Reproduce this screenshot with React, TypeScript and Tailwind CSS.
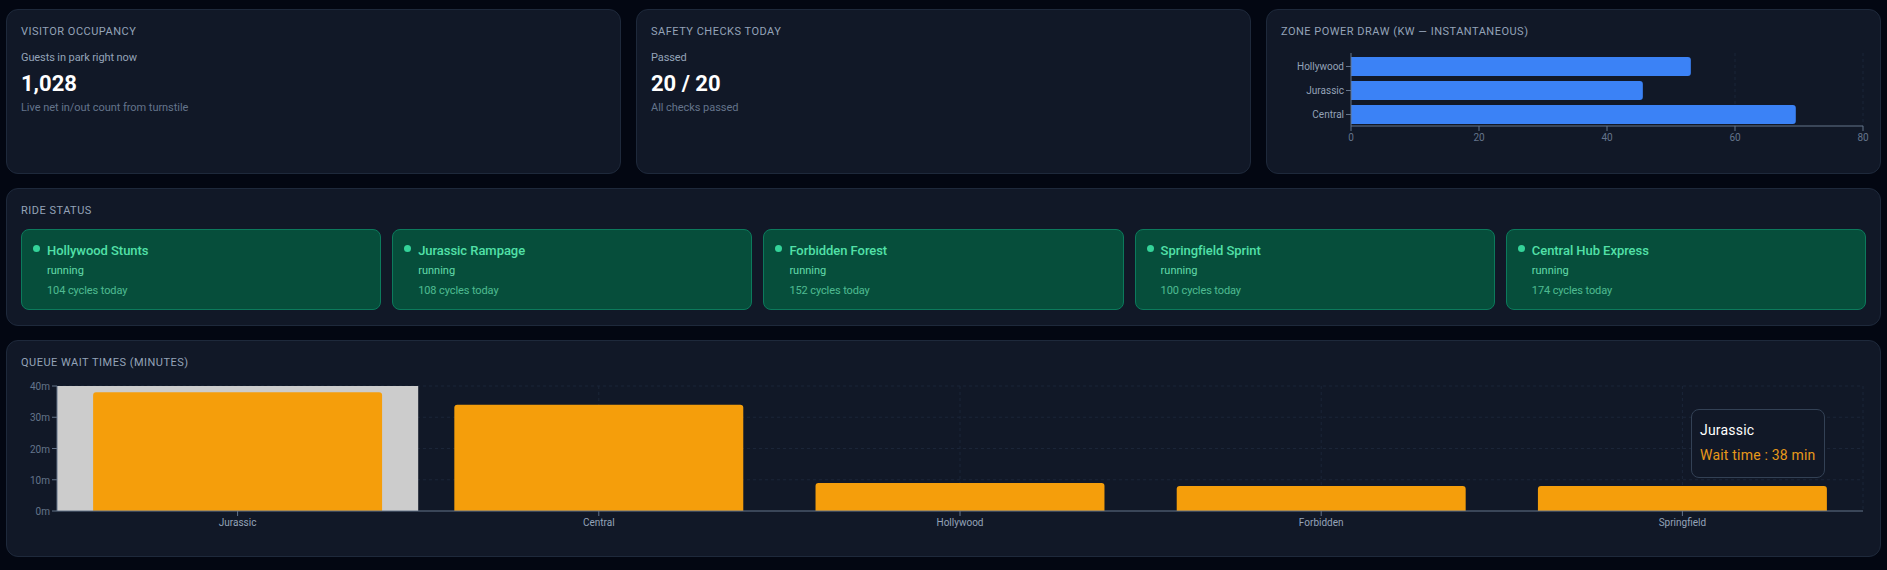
const rides = [
  { name: "Hollywood Stunts", cycles: 104 },
  { name: "Jurassic Rampage", cycles: 108 },
  { name: "Forbidden Forest", cycles: 152 },
  { name: "Springfield Sprint", cycles: 100 },
  { name: "Central Hub Express", cycles: 174 },
];

const power = [
  { name: "Hollywood", value: 53.1 },
  { name: "Jurassic", value: 45.6 },
  { name: "Central", value: 69.5 },
];

const queues = [
  { name: "Jurassic", value: 38 },
  { name: "Central", value: 34 },
  { name: "Hollywood", value: 9 },
  { name: "Forbidden", value: 8 },
  { name: "Springfield", value: 8 },
];

const font = "font-['Roboto','Liberation_Sans',sans-serif]";
const grid = "#1b2538";

function Title({ children }: { children: string }) {
  return <h2 className="text-[11px] leading-4 font-normal uppercase tracking-[0.5px] text-[#94a3b8]">{children}</h2>;
}

function Stat({ title, label, value, note }: { title: string; label: string; value: string; note: string }) {
  return (
    <section className="min-w-0 flex-1 rounded-xl border border-[#1e293b] bg-[#111827] px-[14px] pt-[14px]">
      <Title>{title}</Title>
      <p className="mt-[10px] text-[11px] leading-4 tracking-[-0.1px] text-[#94a3b8]">{label}</p>
      <p className="mt-[4px] text-[22px] leading-7 font-bold text-white">{value}</p>
      <p className="mt-[2px] text-[11px] leading-4 tracking-[-0.05px] text-[#64748b]">{note}</p>
    </section>
  );
}

function PowerChart() {
  const x0 = 70;
  const w = 512;
  const sx = (v: number) => x0 + (v / 80) * w;
  const top = 13;
  const base = 86;
  return (
    <svg width="585" height="105" className="block overflow-visible">
      {[60, 80].map((t) => (
        <line key={t} x1={sx(t)} x2={sx(t)} y1={top} y2={base} stroke={grid} strokeDasharray="3 3" />
      ))}
      {power.map((p, i) => (
        <g key={p.name}>
          <path
            d={`M${x0} ${17 + i * 24}h${sx(p.value) - x0 - 3}a3 3 0 0 1 3 3v13a3 3 0 0 1 -3 3h-${sx(p.value) - x0 - 3}z`}
            fill="#3b82f6"
          />
          <line x1={x0 - 5} x2={x0} y1={26.5 + i * 24} y2={26.5 + i * 24} stroke="#64748b" />
          <text x={x0 - 7} y={30 + i * 24} textAnchor="end" fontSize="10" fill="#94a3b8">{p.name}</text>
        </g>
      ))}
      <line x1={x0} x2={x0} y1={top} y2={base} stroke="#64748b" />
      <line x1={x0} x2={x0 + w} y1={base} y2={base} stroke="#64748b" />
      {[0, 20, 40, 60, 80].map((t) => (
        <g key={t}>
          <line x1={sx(t)} x2={sx(t)} y1={base} y2={base + 5} stroke="#64748b" />
          <text x={sx(t)} y={base + 15} textAnchor="middle" fontSize="10" fill="#64748b">{t}</text>
        </g>
      ))}
    </svg>
  );
}

function QueueChart() {
  const x0 = 36;
  const band = 361.2;
  const top = 15;
  const base = 140;
  const sy = (v: number) => base - (v / 40) * 125;
  return (
    <svg width="1843" height="165" className="block">
      {[0.5, 1.5, 2.5, 3.5, 4.5, 5].map((i) => (
        <line key={i} x1={x0 + i * band} x2={x0 + i * band} y1={top} y2={base} stroke={grid} strokeDasharray="3 3" />
      ))}
      {[10, 20, 30, 40].map((t) => (
        <line key={t} x1={x0} x2={x0 + 5 * band} y1={sy(t)} y2={sy(t)} stroke={grid} strokeDasharray="3 3" />
      ))}
      <rect x={x0} y={top} width={band} height={base - top} fill="#cccccc" />
      {queues.map((q, i) => {
        const x = x0 + i * band + band * 0.1;
        const bw = band * 0.8;
        const y = sy(q.value);
        return (
          <g key={q.name}>
            <path d={`M${x} ${base}V${y + 3}a3 3 0 0 1 3 -3H${x + bw - 3}a3 3 0 0 1 3 3V${base}z`} fill="#f59e0b" />
            <line x1={x + bw / 2} x2={x + bw / 2} y1={base} y2={base + 5} stroke="#64748b" />
            <text x={x + bw / 2} y={base + 15} textAnchor="middle" fontSize="10" fill="#94a3b8">{q.name}</text>
          </g>
        );
      })}
      {[0, 10, 20, 30, 40].map((t) => (
        <g key={t}>
          <line x1={x0 - 5} x2={x0} y1={sy(t)} y2={sy(t)} stroke="#64748b" />
          <text x={x0 - 7} y={sy(t) + 4} textAnchor="end" fontSize="10" fill="#64748b">{t}m</text>
        </g>
      ))}
      <line x1={x0} x2={x0} y1={top} y2={base} stroke="#64748b" />
      <line x1={x0} x2={x0 + 5 * band} y1={base} y2={base} stroke="#64748b" />
    </svg>
  );
}

export default function App() {
  return (
    <div className={`flex h-[570px] flex-col gap-[14px] overflow-hidden bg-[#030712] px-[6px] pt-[9px] ${font}`}>
      <div className="flex h-[165px] gap-[15px]">
        <Stat title="Visitor Occupancy" label="Guests in park right now" value="1,028" note="Live net in/out count from turnstile" />
        <Stat title="Safety Checks Today" label="Passed" value="20 / 20" note="All checks passed" />
        <section className="min-w-0 flex-1 rounded-xl border border-[#1e293b] bg-[#111827] px-[14px] pt-[14px]">
          <Title>Zone Power Draw (kW — instantaneous)</Title>
          <PowerChart />
        </section>
      </div>

      <section className="h-[138px] rounded-xl border border-[#1e293b] bg-[#111827] px-[14px] pt-[14px]">
        <Title>Ride Status</Title>
        <div className="mt-[10px] grid grid-cols-5 gap-[11px]">
          {rides.map((r) => (
            <article key={r.name} className="flex h-[81px] gap-[7px] rounded-lg border border-[#0c7a5c] bg-[#064e3b] px-[11px] pt-[11px]">
              <span className="mt-[4px] size-[7px] shrink-0 rounded-full bg-[#34d399]" />
              <div>
                <p className="text-[13px] leading-[20px] font-medium tracking-[-0.05px] text-[#52e0a8]">{r.name}</p>
                <p className="text-[11px] leading-[20px] text-[#6ee7b7] opacity-90">running</p>
                <p className="text-[11px] leading-[20px] tracking-[-0.1px] text-[#6ee7b7] opacity-70">{r.cycles} cycles today</p>
              </div>
            </article>
          ))}
        </div>
      </section>

      <section className="relative h-[217px] rounded-xl border border-[#1e293b] bg-[#111827] px-[14px] pt-[14px]">
        <Title>Queue Wait Times (minutes)</Title>
        <QueueChart />
        <div className="absolute left-[1684px] top-[68px] h-[69px] w-[134px] rounded-lg border border-[#334155] bg-[#111827] px-[8px] pt-[10px]">
          <p className="text-[14px] leading-5 tracking-[0.2px] text-white">Jurassic</p>
          <p className="mt-[5px] text-[14px] leading-5 tracking-[0.2px] text-[#e8991a]">Wait time : 38 min</p>
        </div>
      </section>
    </div>
  );
}
